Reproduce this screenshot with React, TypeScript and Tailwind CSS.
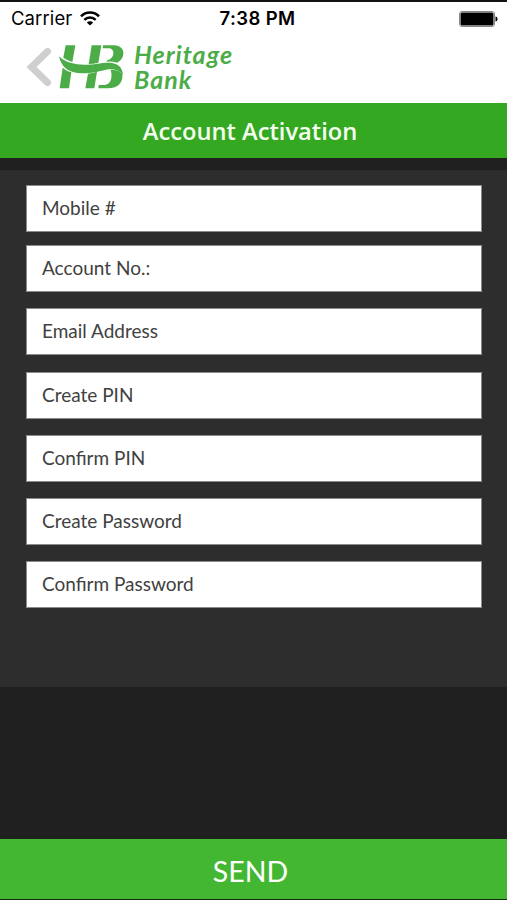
import React from 'react';

const fields = [
  { label: 'Mobile #', gap: 'mt-[15px]' },
  { label: 'Account No.:', gap: 'mt-[13px]' },
  { label: 'Email Address', gap: 'mt-4' },
  { label: 'Create PIN', gap: 'mt-[17px]' },
  { label: 'Confirm PIN', gap: 'mt-4' },
  { label: 'Create Password', gap: 'mt-4' },
  { label: 'Confirm Password', gap: 'mt-4' },
];

function WifiIcon() {
  return (
    <svg className="-mt-0.5 ml-2 h-4 w-5" viewBox="0 0 20 16" fill="none" stroke="#000" strokeWidth="2.5">
      <path d="M1 6.3C6 1.3 14 1.3 19 6.3" />
      <path d="M4.3 9.9C7.5 6.8 12.5 6.8 15.7 9.9" />
      <path d="M6.8 12.4C8.6 10.7 11.4 10.7 13.2 12.4L10 15.6z" fill="#000" stroke="none" />
    </svg>
  );
}

function StatusBar() {
  return (
    <div className="grid h-[34px] grid-cols-3 items-center pr-[9px] pl-[11px] font-['Inter',sans-serif] text-black">
      <div className="flex items-center text-[18.5px] tracking-[0.1px]">
        Carrier
        <WifiIcon />
      </div>
      <div className="pl-[6px] text-center text-[18.5px] font-semibold tracking-[0.4px] whitespace-nowrap">7:38 PM</div>
      <svg className="h-4 w-[39px] justify-self-end" viewBox="0 0 39 16">
        <rect x=".5" y=".5" width="35" height="15" rx="2.5" fill="#fff" stroke="#888" />
        <rect x="1.5" y="1.5" width="33" height="13" rx="1.5" />
        <path d="M36.5 5.5c2.8.4 2.8 4.6 0 5z" />
      </svg>
    </div>
  );
}

function Logo() {
  return (
    <svg className="h-14 w-20" viewBox="0 0 240 168" fill="#4cad48">
      <path d="M41 22H70L61 72Q46 67 34 59z" />
      <path d="M32 89Q43 99 58 103L51 151H23z" />
      <path d="M119 22H148L139 74Q124 78 110 78z" />
      <path d="M108 107Q122 105 135 101L127 151H100z" />
      <path d="M153 22H186C206 23 216 34 214 49C212 62 205 70 195 74Q182 70 164 71L165 67C177 64 183 56 184 47C185 37 179 31 168 31H152z" />
      <path d="M178 96Q198 94 211 108C214 132 199 151 168 151H139L140 141H154C168 141 175 134 178 120Q180 107 176 96z" />
      <path d="M21 55C42 74 66 80 98 80C130 80 146 73 175 74C199 76 211 88 213 110C200 95 181 91 162 95C139 100 119 106 91 106C53 105 29 92 21 55z" />
    </svg>
  );
}

function Header() {
  return (
    <div className="flex h-[67px] items-start pl-6">
      <svg className="mt-[11px] h-[40px] w-7 shrink-0" viewBox="0 0 28 40" fill="none" stroke="#cfcfcf" strokeWidth="7" strokeLinecap="round">
        <path d="M23.5 4.5L7.5 20L23.5 35.5" />
      </svg>
      <div className="mt-0.5">
        <Logo />
      </div>
      <div className="mt-[6px] ml-0.5 font-['Lato',sans-serif] text-[25px] leading-[25px] font-bold tracking-[1px] text-[#4cad48] italic">
        <div>Heritage</div>
        <div>Bank</div>
      </div>
    </div>
  );
}

export default function App() {
  return (
    <div className="flex h-[900px] w-[507px] flex-col overflow-hidden border-t-2 border-b border-t-[#151215] border-b-[#102b0c] bg-[#202020]">
      <div className="h-[101px] shrink-0 bg-white">
        <StatusBar />
        <Header />
      </div>
      <h1 className="flex h-[55px] shrink-0 items-center justify-center bg-[#35a822] pt-0.5 pr-[7px] font-['Open_Sans',sans-serif] text-[23.7px] font-semibold text-[#f4fff0]">
        Account Activation
      </h1>
      <form className="mt-3 flex h-[517px] shrink-0 flex-col bg-[#2d2d2d] pr-[25px] pl-[26px]">
        {fields.map((field) => (
          <label key={field.label} className={`${field.gap} flex h-[47px] shrink-0 items-center border border-[#8b8b8b] bg-white pb-px pl-[15px] font-['Lato',sans-serif] text-[19px] text-[#414141]`}>
            {field.label}
          </label>
        ))}
      </form>
      <button className="mt-auto h-[60px] shrink-0 bg-[#43b731] pt-[5px] pr-1.5 font-['Lato',sans-serif] text-[28.5px] text-white">SEND</button>
    </div>
  );
}
